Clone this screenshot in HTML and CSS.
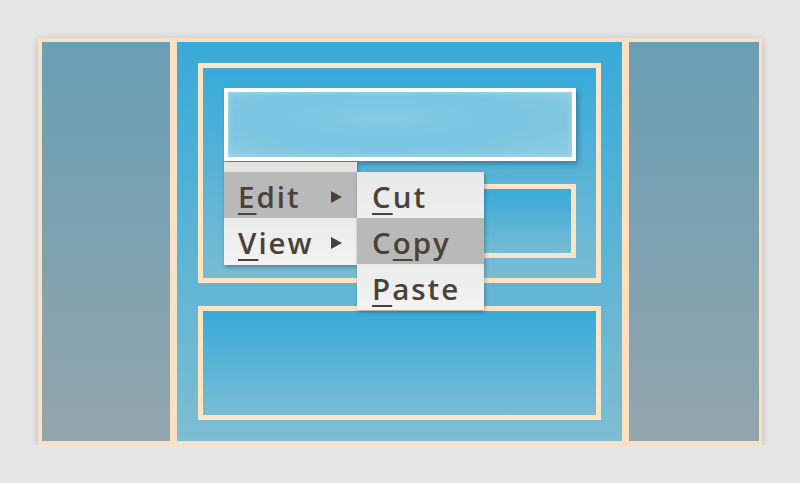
FILE: index.html
```html
<!DOCTYPE html>
<html>
<head>
<meta charset="utf-8">
<link rel="stylesheet" href="styles.css">
</head>
<body>
<div class="frame">
  <div class="side"></div>
  <div class="center">
    <div class="box box-top">
      <div class="bar-wrap">
        <div class="bar"></div>
        <div class="menu">
          <div class="menu-pad"></div>
          <div class="item active">
            <span class="label"><span class="u">E</span>dit</span>
            <span class="arrow"></span>
            <div class="submenu">
              <div class="item sub-first"><span class="label"><span class="u">C</span>ut</span></div>
              <div class="item active"><span class="label">C<span class="u">o</span>py</span></div>
              <div class="item"><span class="label"><span class="u">P</span>aste</span></div>
            </div>
          </div>
          <div class="item">
            <span class="label"><span class="u">V</span>iew</span>
            <span class="arrow"></span>
          </div>
        </div>
      </div>
      <div class="inner-box"></div>
    </div>
    <div class="box box-bottom"></div>
  </div>
  <div class="side"></div>
</div>
</body>
</html>
```
FILE: styles.css
```css
html, body {
  margin: 0;
  padding: 0;
  background: #e6e6e6;
}
body {
  padding: 38px 38px 0 38px;
  font-family: "Open Sans", "Lato", sans-serif;
}
.frame {
  width: 724px;
  height: 407px;
  box-sizing: border-box;
  padding: 4px 3px 4px 4px;
  background: #fbe1c2;
  display: grid;
  grid-template-columns: 128px 445px 1fr;
  column-gap: 7px;
  box-shadow: 0 2px 9px rgba(0, 0, 0, 0.2);
}
.side {
  background: linear-gradient(180deg, #699fb5 0%, #93a5ac 100%);
}
.center {
  background: linear-gradient(180deg, #38aad9 0%, #7ebdd2 100%);
  padding: 21px;
  display: flex;
  flex-direction: column;
  gap: 23px;
}
.box {
  border: 5px solid #fde4c5;
  background: linear-gradient(180deg, #38aad9 0%, #79bcd3 100%);
}
.box-top {
  height: 220px;
  box-sizing: border-box;
  padding: 20px 20px 20px 21px;
  display: flex;
  flex-direction: column;
  gap: 23px;
}
.box-bottom {
  height: 114px;
  box-sizing: border-box;
}
.bar-wrap {
  position: relative;
  height: 73px;
}
.bar {
  height: 100%;
  box-sizing: border-box;
  border: 4px solid #ffffff;
  background: radial-gradient(ellipse at 45% 40%, #84cbe6 0%, #78c4e2 45%, #8fcbe1 100%);
  box-shadow: 2px 3px 5px rgba(0, 40, 70, 0.35), inset 0 0 6px rgba(255, 255, 255, 0.35);
}
.inner-box {
  height: 74px;
  box-sizing: border-box;
  border: 5px solid #fde4c5;
  background: linear-gradient(180deg, #38aad9 0%, #77bbd3 100%);
}
.menu {
  position: absolute;
  left: 0;
  top: 74px;
  width: 133px;
  background: #efefef;
  box-shadow: 1px 2px 4px rgba(0, 0, 0, 0.3);
  z-index: 2;
}
.menu-pad {
  height: 10px;
  background: #e4e4e4;
}
.item {
  position: relative;
  height: 46px;
  display: flex;
  align-items: center;
  padding-left: 14px;
  padding-right: 14px;
  box-sizing: border-box;
  background: linear-gradient(180deg, #ebebeb 0%, #f3f3f3 100%);
  color: #4a4138;
  font-size: 29.5px;
  font-weight: 600;
  letter-spacing: 2px;
}
.menu > .item:last-child {
  height: 47px;
}
.item.active {
  background: #b9b9b9;
}
.label {
  flex: 1;
  line-height: 1;
  padding-top: 3px;
}
.u {
  text-decoration: underline;
  text-decoration-thickness: 2px;
  text-underline-offset: 5px;
}
.arrow {
  width: 0;
  height: 0;
  border-top: 6.5px solid transparent;
  border-bottom: 6.5px solid transparent;
  border-left: 11px solid #4a4138;
  margin-top: 3px;
  margin-right: 1px;
}
.submenu {
  position: absolute;
  left: 133px;
  top: 0;
  width: 127px;
  box-shadow: 1px 2px 4px rgba(0, 0, 0, 0.3);
  z-index: 3;
}
.submenu .item {
  padding-left: 15px;
}
.submenu .sub-first {
  background: linear-gradient(180deg, #e8e8e8 0%, #eeeeee 100%);
}
```
